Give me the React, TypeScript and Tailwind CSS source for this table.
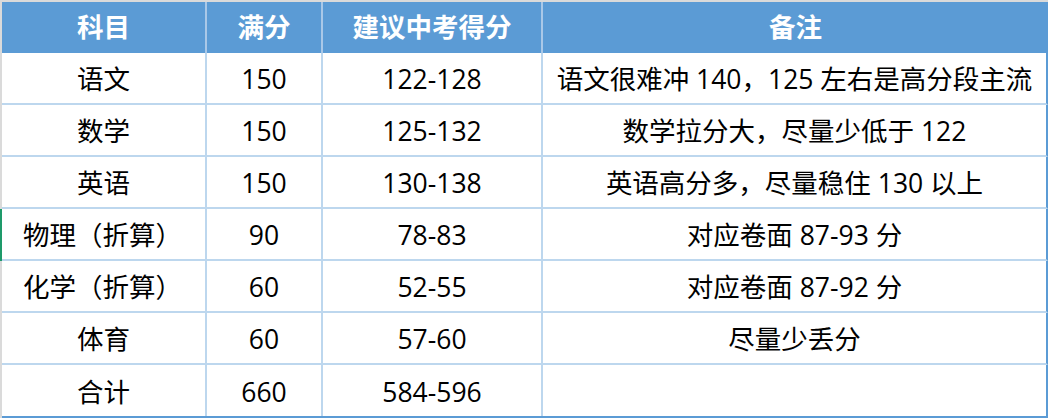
import React from 'react';

type Row = { subject: string; full: string; advice: string; note: string; shift?: boolean; mark?: boolean };

const rows: Row[] = [
  { subject: '语文', full: '150', advice: '122-128', note: '语文很难冲 140，125 左右是高分段主流' },
  { subject: '数学', full: '150', advice: '125-132', note: '数学拉分大，尽量少低于 122' },
  { subject: '英语', full: '150', advice: '130-138', note: '英语高分多，尽量稳住 130 以上' },
  { subject: '物理（折算）', full: '90', advice: '78-83', note: '对应卷面 87-93 分', shift: true, mark: true },
  { subject: '化学（折算）', full: '60', advice: '52-55', note: '对应卷面 87-92 分', shift: true },
  { subject: '体育', full: '60', advice: '57-60', note: '尽量少丢分' },
  { subject: '合计', full: '660', advice: '584-596', note: '' },
];

const cols = ['w-[205px]', 'w-[116px]', 'w-[220px]', 'flex-1'];

function App() {
  return (
    <div
      className="w-[1048px] h-[418px] overflow-hidden bg-[#dadada] pt-[2px] text-[26.5px] text-black"
      style={{ fontFamily: '"Open Sans", "Noto Sans CJK SC", sans-serif' }}
    >
      {/* header */}
      <div className="flex h-[51px]">
        <div className="w-[2px] bg-[#dadada]" />
        <div className="flex flex-1 bg-[#5b9bd5] font-bold text-white">
          {['科目', '满分', '建议中考得分', '备注'].map((h, i) => (
            <div
              key={h}
              className={`${cols[i]} flex items-center justify-center ${i < 3 ? 'border-r-2 border-[#a9c8e8]' : ''}`}
            >
              {h}
            </div>
          ))}
        </div>
      </div>

      {rows.map((r, ri) => {
        const last = ri === rows.length - 1;
        return (
          <div key={r.subject} className={`flex ${last ? 'h-[53px]' : 'h-[52px]'}`}>
            <div className={`w-[2px] ${r.mark ? 'bg-[#1e9a6a]' : 'bg-[#dadada]'}`} />
            <div
              className={`flex flex-1 bg-white border-r-2 border-[#5b9bd5] ${
                last ? 'border-b-2 border-b-[#5b9bd5]' : 'border-b-2 border-b-[#bdd7ee]'
              }`}
            >
              <div className={`${cols[0]} flex items-center justify-center pt-[4px] border-r-2 border-[#bdd7ee] whitespace-nowrap ${r.shift ? 'pr-[2px]' : ''}`}>
                {r.subject}
              </div>
              <div className={`${cols[1]} flex items-center justify-center pt-[4px] border-r-2 border-[#bdd7ee]`}>
                {r.full}
              </div>
              <div className={`${cols[2]} flex items-center justify-center pt-[4px] border-r-2 border-[#bdd7ee]`}>
                {r.advice}
              </div>
              <div className={`${cols[3]} flex items-center justify-center pt-[4px] whitespace-nowrap`}>
                {r.note}
              </div>
            </div>
          </div>
        );
      })}
    </div>
  );
}

export default App;
